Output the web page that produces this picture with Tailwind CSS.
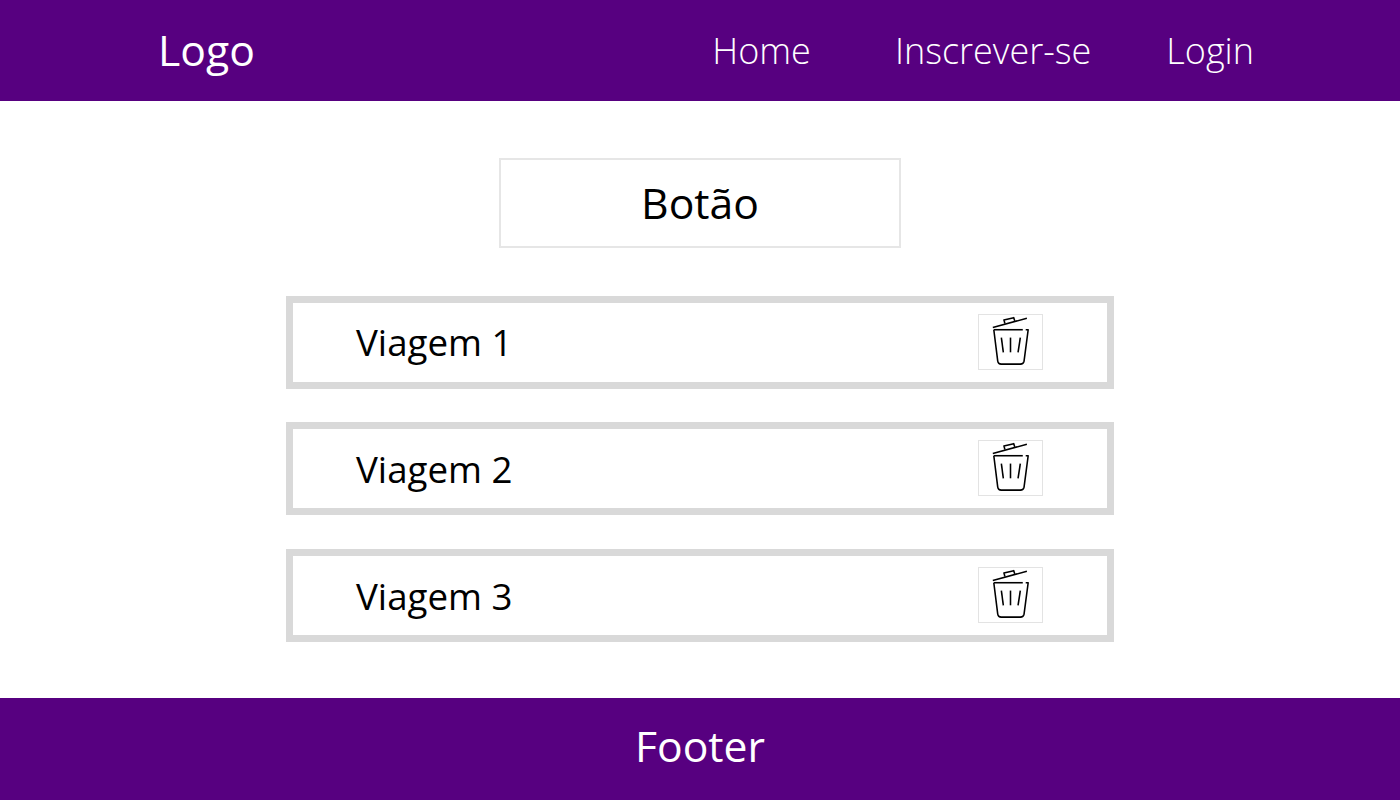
<!DOCTYPE html>
<html lang="en">
<head>
<meta charset="UTF-8">
<title>Viagens</title>
<script src="https://cdn.jsdelivr.net/npm/@tailwindcss/browser@4"></script>
</head>
<body class="bg-white font-['Open_Sans',sans-serif] text-black">
<div class="h-[800px] w-[1400px] flex flex-col overflow-hidden">
  <header class="h-[101px] bg-[#570080] text-white flex items-center justify-between pl-[158px] pr-[146px]">
    <span class="text-[42.7px]">Logo</span>
    <nav class="flex gap-[75px] text-[36px] font-light">
      <a class="mr-[9px]">Home</a>
      <a>Inscrever-se</a>
      <a>Login</a>
    </nav>
  </header>
  <main class="flex-1 flex flex-col items-center pt-[57px]">
    <button class="w-[402px] h-[90px] border-2 border-[#e6e6e6] text-[42.7px] flex items-center justify-center">Botão</button>
    <ul class="mt-[48px] flex flex-col">
      <li class="w-[828px] h-[93px] border-[7px] border-[#d9d9d9] flex items-center justify-between pl-[63px] pr-[64px]">
        <span class="text-[36.7px]">Viagem 1</span>
        <span class="w-[65px] h-[56px] mb-[2px] border border-[#e3e3e3]">
          <svg class="w-full h-full" viewBox="0 0 64 55" fill="none" stroke="black" stroke-width="1.6" stroke-linejoin="round"><path d="M14 12.700 L48.700 3.300"/><path d="M26.300 8.700 L25.300 5 L35.300 2.700 L36.300 6"/><path d="M15 15 H44.500"/><path d="M47.500 15 H50 L45.800 47 Q45.300 50 42 50 H22.500 Q19.500 50 19 47 L15 15"/><path d="M22.700 23 L24.700 38"/><path d="M32 23 V38"/><path d="M42 23 L39.700 38"/></svg>
        </span>
      </li>
      <li class="mt-[33px] w-[828px] h-[93px] border-[7px] border-[#d9d9d9] flex items-center justify-between pl-[63px] pr-[64px]">
        <span class="text-[36.7px] mt-[2px]">Viagem 2</span>
        <span class="w-[65px] h-[56px] mb-[2px] border border-[#e3e3e3]">
          <svg class="w-full h-full" viewBox="0 0 64 55" fill="none" stroke="black" stroke-width="1.6" stroke-linejoin="round"><path d="M14 12.700 L48.700 3.300"/><path d="M26.300 8.700 L25.300 5 L35.300 2.700 L36.300 6"/><path d="M15 15 H44.500"/><path d="M47.500 15 H50 L45.800 47 Q45.300 50 42 50 H22.500 Q19.500 50 19 47 L15 15"/><path d="M22.700 23 L24.700 38"/><path d="M32 23 V38"/><path d="M42 23 L39.700 38"/></svg>
        </span>
      </li>
      <li class="mt-[34px] w-[828px] h-[93px] border-[7px] border-[#d9d9d9] flex items-center justify-between pl-[63px] pr-[64px]">
        <span class="text-[36.7px] mt-[2px]">Viagem 3</span>
        <span class="w-[65px] h-[56px] mb-[2px] border border-[#e3e3e3]">
          <svg class="w-full h-full" viewBox="0 0 64 55" fill="none" stroke="black" stroke-width="1.6" stroke-linejoin="round"><path d="M14 12.700 L48.700 3.300"/><path d="M26.300 8.700 L25.300 5 L35.300 2.700 L36.300 6"/><path d="M15 15 H44.500"/><path d="M47.500 15 H50 L45.800 47 Q45.300 50 42 50 H22.500 Q19.500 50 19 47 L15 15"/><path d="M22.700 23 L24.700 38"/><path d="M32 23 V38"/><path d="M42 23 L39.700 38"/></svg>
        </span>
      </li>
    </ul>
  </main>
  <footer class="h-[102px] pb-[6px] bg-[#570080] text-white flex items-center justify-center text-[42.7px]">Footer</footer>
</div>
</body>
</html>
